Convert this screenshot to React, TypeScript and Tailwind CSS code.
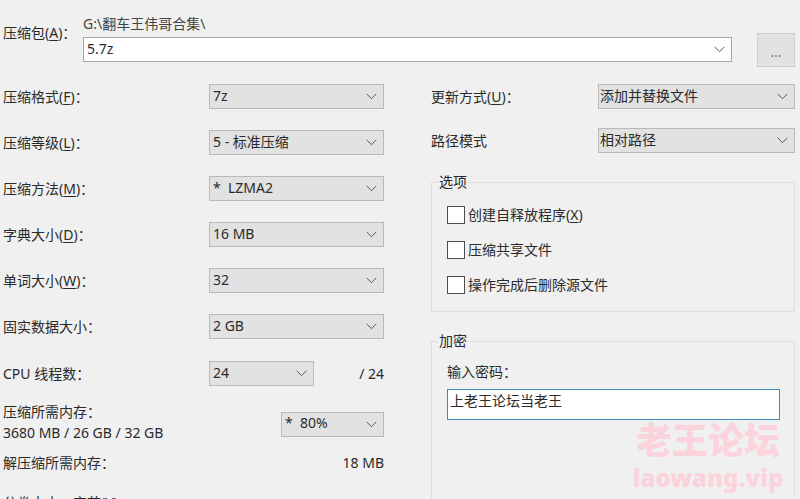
import type { ReactNode } from "react";

const FONT = "font-['Noto_Sans','Noto_Sans_CJK_SC',sans-serif]";

function Chevron() {
  return (
    <svg width="11" height="7" viewBox="0 0 11 7" fill="none" className="shrink-0">
      <path d="M0.7 0.9 L5.5 5.7 L10.3 0.9" stroke="#555" strokeWidth="1" />
    </svg>
  );
}

function Select({ value, className = "" }: { value: string; className?: string }) {
  return (
    <div className={`flex h-[25px] items-center justify-between border border-[#b9b9b9] bg-[#e2e2e2] pr-[6px] ${className}`}>
      <span className="-mt-[2px] whitespace-pre">{value}</span>
      <Chevron />
    </div>
  );
}

function Key({ k }: { k: string }) {
  return (
    <>
      (<span className="underline underline-offset-2">{k}</span>)：
    </>
  );
}

function Row({ label, children }: { label: ReactNode; children: ReactNode }) {
  return (
    <div className="flex h-[25px] items-center">
      <div className="w-[206px] shrink-0 whitespace-nowrap">{label}</div>
      {children}
    </div>
  );
}

function Check({ label }: { label: ReactNode }) {
  return (
    <div className="flex h-[18px] items-center gap-[3px]">
      <div className="h-[18px] w-[18px] border border-[#4d4d4d] bg-white" />
      <span className="whitespace-nowrap">{label}</span>
    </div>
  );
}

export default function App() {
  return (
    <div className={`relative h-[499px] w-[800px] overflow-hidden bg-[#f0f0f0] text-[14px] leading-[20px] text-[#2a2a2a] ${FONT}`}>
      {/* Archive path */}
      <div className="flex pl-[3px] pt-[14px]">
        <div className="w-[80px] shrink-0 pt-[9px]">
          压缩包<Key k="A" />
        </div>
        <div className="w-[649px] shrink-0">
          <div className="h-[23px] text-[#444]">G:\翻车王伟哥合集\</div>
          <div className="flex h-[25px] items-center justify-between border border-[#a6a6a6] bg-white pl-[3px] pr-[6px]">
            <span className="-mt-[2px]">5.7z</span>
            <Chevron />
          </div>
        </div>
        <div className="ml-[25px] mt-[19px] flex h-[34px] w-[38px] items-center justify-center border border-[#cfcfcf] bg-[#e2e2e2] pt-[4px] text-[#777]">
          ...
        </div>
      </div>

      <div className="flex pl-[3px] pt-[17px]">
        {/* Left column */}
        <div className="flex w-[381px] shrink-0 flex-col gap-[21px]">
          <Row label={<>压缩格式<Key k="F" /></>}>
            <Select value="7z" className="w-[175px] pl-[3px]" />
          </Row>
          <Row label={<>压缩等级<Key k="L" /></>}>
            <Select value="5 - 标准压缩" className="w-[175px] pl-[3px]" />
          </Row>
          <Row label={<>压缩方法<Key k="M" /></>}>
            <Select value="*  LZMA2" className="w-[175px] pl-[3px]" />
          </Row>
          <Row label={<>字典大小<Key k="D" /></>}>
            <Select value="16 MB" className="w-[175px] pl-[3px]" />
          </Row>
          <Row label={<>单词大小<Key k="W" /></>}>
            <Select value="32" className="w-[175px] pl-[3px]" />
          </Row>
          <Row label="固实数据大小：">
            <Select value="2 GB" className="w-[175px] pl-[3px]" />
          </Row>
          <div className="mt-px">
            <Row label="CPU 线程数：">
              <Select value="24" className="w-[105px] pl-[3px]" />
              <span className="ml-auto">/ 24</span>
            </Row>
          </div>
          <div className="-mt-[5px] flex items-center justify-between">
            <div className="-mt-px leading-[21px]">
              <div>压缩所需内存：</div>
              <div>3680 MB / 26 GB / 32 GB</div>
            </div>
            <Select value="*  80%" className="mt-[3px] w-[103px] pl-[3px]" />
          </div>
          <div className="-mt-[11px] flex justify-between">
            <span>解压缩所需内存：</span>
            <span>18 MB</span>
          </div>
          <div className="-mt-px">分卷大小，字节(V)：</div>
        </div>

        {/* Right column */}
        <div className="ml-[47px] w-[364px] shrink-0">
          <div className="flex h-[25px] items-center">
            <div className="w-[167px] shrink-0">更新方式<Key k="U" /></div>
            <Select value="添加并替换文件" className="w-[197px] pl-px" />
          </div>
          <div className="mt-[19px] flex h-[25px] items-center">
            <div className="w-[167px] shrink-0">路径模式</div>
            <Select value="相对路径" className="w-[197px] pl-px" />
          </div>

          <div className="relative mt-[29px] flex h-[130px] flex-col gap-[17px] border border-[#dedede] pl-[15px] pt-[23px]">
            <span className="absolute -top-[11px] left-[6px] bg-[#f0f0f0] px-px">选项</span>
            <Check label={<>创建自释放程序(<span className="underline underline-offset-2">X</span>)</>} />
            <Check label="压缩共享文件" />
            <Check label="操作完成后删除源文件" />
          </div>

          <div className="relative mt-[29px] h-[200px] border border-[#dedede] pl-[15px] pt-[20px]">
            <span className="absolute -top-[11px] left-[6px] bg-[#f0f0f0] px-px">加密</span>
            <div>输入密码：</div>
            <div className="mt-[7px] h-[31px] w-[333px] border border-[#3f8bbd] bg-white pl-[2px] pt-px">上老王论坛当老王</div>
          </div>
        </div>
      </div>

      {/* Watermark */}
      <div className="absolute left-[633px] top-[423px] flex w-[150px] flex-col items-center font-black text-[#fbd3dc]">
        <span className="whitespace-nowrap text-[36px] leading-[36px]">老王论坛</span>
        <span className="mt-[4px] whitespace-nowrap text-[24px] leading-[30px]">laowang.vip</span>
      </div>
    </div>
  );
}
